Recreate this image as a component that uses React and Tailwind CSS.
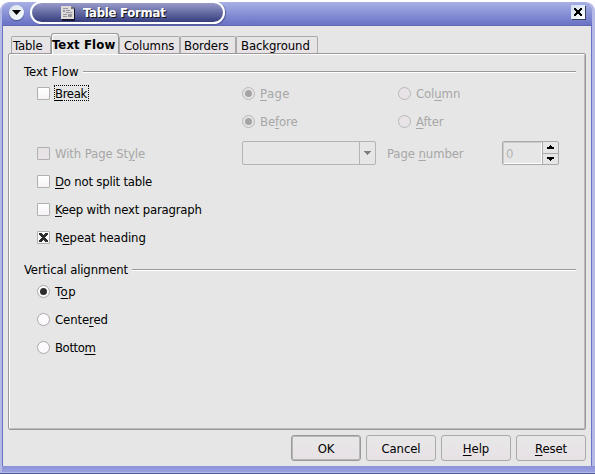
import React from "react";

function Label({ text, hot, className = "tracking-[-0.1px]" }) {
  const i = hot === undefined ? -1 : hot;
  return (
    <span className={"whitespace-pre " + className}>
      {i < 0 ? text : (
        <>
          {text.slice(0, i)}
          <span className="underline decoration-1 underline-offset-2">{text[i]}</span>
          {text.slice(i + 1)}
        </>
      )}
    </span>
  );
}

function Check({ checked, disabled }) {
  return (
    <span className={"flex size-[13px] shrink-0 items-center justify-center border border-[#b0b0b0] rounded-[1px] " + (disabled ? "bg-[#e6e2e5]" : "bg-linear-to-b from-white to-[#f6f2f6]")}>
      {checked && (
        <svg width="9" height="9" viewBox="0 0 9 9">
          <path d="M0 0h3v1h1v1h1V1h1V0h3v2H8v1H7v1H6v1h1v1h1v1h1v2H6V8H5V7H4v1H3v1H0V7h1V6h1V5h1V4H2V3H1V2H0z" fill="#2d2d2d" />
        </svg>
      )}
    </span>
  );
}

function Radio({ checked, disabled }) {
  return (
    <span className={"flex size-[13px] shrink-0 items-center justify-center rounded-full border " + (disabled ? "border-[#b8b8b8] bg-[#e7e3e6]" : "border-[#a8a8a8] bg-[#fdfafd]")}>
      {checked && <span className={"size-[7px] rounded-full " + (disabled ? "bg-[#a4a4a4]" : "bg-[#2d2d2d]")} />}
    </span>
  );
}

function Option({ radio, checked, disabled, focus, text, hot, spacing, className = "" }) {
  return (
    <div className={"flex h-7 items-center " + (disabled ? "text-[#a6a6a6] " : "") + className}>
      {radio ? <Radio checked={checked} disabled={disabled} /> : <Check checked={checked} disabled={disabled} />}
      <span className={"ml-1 flex h-4 items-center border border-dotted " + (focus ? "w-[35px] border-black" : "border-transparent")}>
        <Label text={text} hot={hot} className={spacing} />
      </span>
    </div>
  );
}

function GroupTitle({ text, spacing }) {
  return (
    <div className="flex h-[15px] items-center">
      <Label text={text} className={spacing} />
      <div className="ml-1 h-[2px] flex-1 border-t border-[#999] bg-white" />
    </div>
  );
}

function Tab({ text, active, className }) {
  if (active)
    return (
      <div className={"relative -mb-px flex h-[21px] items-center rounded-t-[3px] border border-b-0 border-[#999] bg-[#e6e6e6] font-bold shadow-[inset_1px_1px_0_#fff] " + className}>
        <Label text={text} className="tracking-[0.12px]" />
      </div>
    );
  return (
    <div className={"flex h-[17px] items-center rounded-t-[2px] border border-b-0 border-[#aaa] bg-linear-to-b from-[#e6e6e6] to-[#e8e2e6] " + className}>
      <Label text={text} />
    </div>
  );
}

function Button({ text, hot, primary }) {
  return (
    <div className={"flex h-[26px] w-[70px] items-center justify-center rounded-[3px] border bg-linear-to-b from-[#e8e8e8] to-[#e7e1e5] " + (primary ? "border-[#999] shadow-[inset_0_0_0_1px_#b8b8b8]" : "border-[#aaa]")}>
      <Label text={text} hot={hot} />
    </div>
  );
}

function TitleBar() {
  return (
    <div className="flex h-6 rounded-t-[9px] border-b border-[#5f69b3] bg-linear-to-b from-[#a9b0e5] to-[#6972c5]">
      <div className="mt-[3px] ml-[7px] flex size-[15px] items-center justify-center rounded-full bg-linear-to-br from-[#dce4ed] to-[#f5fbff] shadow-[0_1px_1px_#46527f]">
        <svg width="9" height="5" viewBox="0 0 9 5"><path d="M0 0h9L4.5 5z" fill="#000" /></svg>
      </div>
      <div className="ml-[6px] flex h-[23px] w-[195px] -translate-y-px items-center rounded-full border-2 border-white bg-linear-to-b from-[#999bc9] to-[#373e7e] pl-7 shadow-[1px_1px_1px_#555c9c]">
        <svg width="16" height="16" viewBox="0 0 16 16">
          <path d="M2 2h11l2 2v12H2z" fill="#15152d" />
          <path d="M1 1h10l3 3v10H1z" fill="#dedbd8" />
          <path d="M11 1v3h3z" fill="#777" />
          <path d="M3 3h5v1H3zM3 5h2v2H3zM6 5h4v1H6zM6 7h6v1H6zM3 9h4v1H3zM8 9h4v3H8zM3 11h4v1H3z" fill="#9998a0" />
        </svg>
        <Label text="Table Format" className="ml-[7px] font-bold tracking-[-0.25px] text-white [text-shadow:1px_1px_0_#111]" />
      </div>
      <div className="flex-1" />
      <div className="mt-[3px] mr-[7px] flex size-[14px] items-center justify-center bg-linear-to-br from-[#cfdded] to-white shadow-[1px_1px_0_#36405f]">
        <svg width="8" height="8" viewBox="0 0 8 8"><path d="M0 0h2v1h1v1h2V1h1V0h2v2H7v1H6v2h1v1h1v2H6V7H5V6H3v1H2v1H0V6h1V5h1V3H1V2H0z" fill="#000" /></svg>
      </div>
    </div>
  );
}

export default function App() {
  return (
    <div className="h-[474px] w-[595px] overflow-hidden bg-white pt-[2px] font-['DejaVu_Sans_Condensed','DejaVu_Sans',sans-serif] text-[13px] leading-[15px] text-black">
      <div className="flex h-[472px] flex-col rounded-t-[9px] border-b border-[#555ba0] bg-[#b4b9e5]">
        <div className="mr-[3px] ml-[2px]"><TitleBar /></div>
        <div className="mr-[3px] ml-[2px] flex h-[440px] flex-col border-x border-[#6972c5] bg-[#e6e6e6]">
          <div className="ml-2 flex h-[27px] items-end">
            <Tab text="Table" className="w-10 pl-px" />
            <Tab text="Text Flow" active className="w-[68px]" />
            <Tab text="Columns" className="w-[61px] pl-1" />
            <Tab text="Borders" className="w-[56px] pl-[3px]" />
            <Tab text="Background" className="w-[82px] pl-1" />
          </div>
          <div className="ml-[5px] h-[377px] w-[578px] rounded-[2px] border border-[#999] pt-[10px] pr-[9px] pl-[15px] shadow-[inset_1px_1px_0_#fff,inset_-1px_-1px_0_#bbb]">
            <GroupTitle text="Text Flow" spacing="tracking-[0.1px]" />
            <div className="grid grid-cols-[205px_156px_1fr] pl-[13px]">
              <Option text="Break" hot={0} spacing="tracking-[-0.35px]" focus />
              <Option radio checked disabled text="Page" hot={0} spacing="tracking-[0.4px]" />
              <Option radio disabled text="Column" hot={3} />
              <div />
              <Option radio checked disabled text="Before" hot={2} />
              <Option radio disabled text="After" hot={0} />
            </div>
            <div className="mt-1 flex h-7 items-center pl-[13px]">
              <Option disabled text="With Page Style" hot={12} className="w-[205px]" />
              <div className="flex h-6 w-[134px] justify-end rounded-[2px] border border-[#b4b4b4]">
                <div className="flex w-[16px] items-center justify-center border-l border-[#b4b4b4]">
                  <svg width="7" height="4" viewBox="0 0 7 4"><path d="M0 0h7v1H6v1H5v1H4v1H3V3H2V2H1V1H0z" fill="#7f7f7f" /></svg>
                </div>
              </div>
              <Label text="Page number" hot={5} className="ml-[11px] w-[115px] tracking-[-0.1px] text-[#a6a6a6]" />
              <div className="flex h-6 w-[57px] rounded-[2px] border border-[#aaa]">
                <div className="flex flex-1 items-center border border-t-[#ccc] border-r-white border-b-white border-l-[#ccc] pl-[2px] text-[#b4b4b4]">0</div>
                <div className="flex w-4 flex-col border-l border-[#aaa]">
                  <div className="flex flex-1 items-center justify-center border-b border-[#aaa]">
                    <svg width="7" height="4" viewBox="0 0 7 4"><path d="M3 0h1v1h1v1h2v2H0V2h2V1h1z" /></svg>
                  </div>
                  <div className="flex flex-1 items-center justify-center">
                    <svg width="7" height="4" viewBox="0 0 7 4"><path d="M0 0h7v2H5v1H4v1H3V3H2V2H0z" /></svg>
                  </div>
                </div>
              </div>
            </div>
            <div className="pl-[13px]">
              <Option text="Do not split table" hot={0} spacing="tracking-[-0.2px]" />
              <Option text="Keep with next paragraph" hot={0} spacing="tracking-[-0.2px]" />
              <Option checked text="Repeat heading" hot={1} />
            </div>
            <div className="mt-[11px]"><GroupTitle text="Vertical alignment" spacing="tracking-[-0.14px]" /></div>
            <div className="pl-[13px]">
              <Option radio checked text="Top" hot={1} spacing="tracking-[0.6px]" />
              <Option radio text="Centered" hot={5} />
              <Option radio text="Bottom" hot={5} spacing="tracking-[-0.4px]" />
            </div>
          </div>
          <div className="mt-[5px] mr-[5px] flex justify-end gap-[5px]">
            <Button text="OK" primary />
            <Button text="Cancel" />
            <Button text="Help" hot={0} />
            <Button text="Reset" hot={0} />
          </div>
        </div>
        <div className="ml-[2px] h-[6px] bg-linear-to-b from-[#8c92d8] to-[#9aa0de]" />
      </div>
    </div>
  );
}
